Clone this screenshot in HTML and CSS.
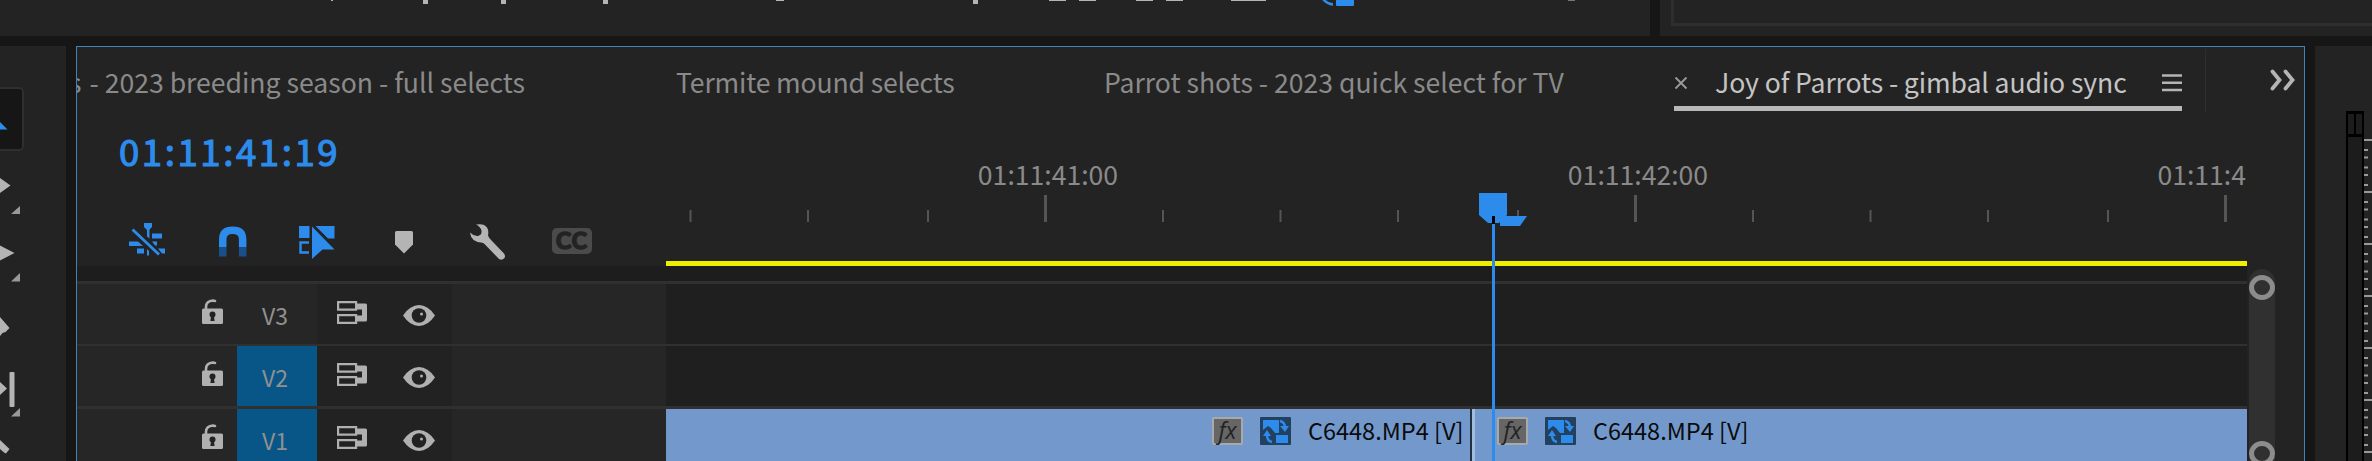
FILE: index.html
```
<!DOCTYPE html>
<html lang="en">
<head>
    <meta charset="UTF-8">
    <meta name="viewport" content="width=device-width, initial-scale=1.0">
    <title>Timeline - Joy of Parrots</title>
    <link rel="stylesheet" href="styles.css">
</head>
<body>
    <!-- Shared icons -->
    <svg class="sprite">
        <symbol id="lock" viewBox="0 0 21 25">
            <path d="M4 10V8Q4 2 11 1.5L13 2" fill="none" stroke="#b0b0b0" stroke-width="2.6" stroke-linecap="round"/>
            <rect y="9.5" width="21" height="15.5" rx="1.5" fill="#b0b0b0"/>
            <circle cx="10.5" cy="15.5" r="3" fill="#222"/>
            <path d="M9.2 16h2.6l.8 6h-4.2z" fill="#222"/>
        </symbol>
        <symbol id="sync" viewBox="0 0 30 23">
            <path d="M1.1 1.1h18v7.6h-18zM1.1 14.2h18v7.6h-18z" fill="none" stroke="#b0b0b0" stroke-width="2.2"/>
            <path d="M20 2.5h8.500q1.500 0 1.500 1.500v15q0 1.500-1.500 1.500h-8.500v-6h5v-6h-5z" fill="#b0b0b0"/>
        </symbol>
        <symbol id="eye" viewBox="0 0 32 21">
            <path d="M0 10.500Q7 0 16 0t16 10.500Q25 21 16 21T0 10.500z" fill="#b0b0b0"/>
            <circle cx="16" cy="10.500" r="7.300" fill="#222"/>
            <circle cx="18.500" cy="9" r="1.500" fill="#b0b0b0"/>
        </symbol>
        <symbol id="proxy" viewBox="0 0 31 28">
            <rect width="31" height="28" rx="1" fill="#24405f"/>
            <path d="M3 3h16v13h-4l-4-5-3-2-5 4z" fill="#2d8ceb"/>
            <path d="M16 18h12v8h-12z" fill="#2d8ceb"/>
            <path d="M20 4q5 1 5 7" fill="none" stroke="#2d8ceb" stroke-width="2.500"/>
            <path d="M20 9h9l-4 6zM3 19l4-6 4 6z" fill="#2d8ceb"/>
            <path d="M7 18q0 6 5 7" fill="none" stroke="#2d8ceb" stroke-width="2.500"/>
        </symbol>
    </svg>

    <div class="app">
        <div class="top-row">
            <div class="monitor">
                <svg width="1650" height="8">
                    <g fill="#b4b4b4">
                        <rect x="331" width="2" height="1"/>
                        <rect x="423" width="5" height="4"/>
                        <rect x="501" width="5" height="4"/>
                        <rect x="603" width="5" height="4"/>
                        <rect x="776" width="8" height="1"/>
                        <rect x="973" width="5" height="4"/>
                        <rect x="1049" width="17" height="1"/>
                        <rect x="1079" width="17" height="1"/>
                        <rect x="1136" width="17" height="1"/>
                        <rect x="1166" width="17" height="1"/>
                        <rect x="1231" width="35" height="1"/>
                        <rect x="1568" width="7" height="1" fill="#777"/>
                    </g>
                    <path d="M1323 -1Q1327 4 1333 4.500" fill="none" stroke="#2d8ceb" stroke-width="2.500"/>
                    <rect x="1336" y="-2" width="18" height="8" rx="1" fill="#2d8ceb"/>
                </svg>
            </div>
            <div class="program">
                <div class="program-frame"></div>
            </div>
        </div>

        <div class="main-row">
            <div class="tools">
                <div class="tool-active"></div>
                <svg class="tool-icons" width="66" height="415">
                    <path d="M0 76l7.500 7.500H0z" fill="#2d8ceb"/>
                    <g fill="#b4b4b4">
                        <path d="M0 132l10.500 7.500L0 147z"/>
                        <path d="M0 199.500l14.500 7.500L0 214.500z"/>
                        <path d="M0 271l9.500 11-4 4-3 1-2.500 3z"/>
                        <path d="M0 336l7 6.500L0 349z"/>
                        <rect x="9.500" y="326" width="5" height="35" rx="1"/>
                        <path d="M0 394l9.500 9-3.500 4.500-2-1L0 403z"/>
                    </g>
                    <path d="M20 160v8h-9zM20 227v8.500h-9zM20 362v8.500h-9z" fill="#999"/>
                </svg>
            </div>

            <div class="timeline">
                <div class="tabs">
                    <div class="tab tab-first"><span class="cut">s</span> <span class="name">- 2023 breeding season - full selects</span></div>
                    <div class="tab tab-termite"><span class="name">Termite mound selects</span></div>
                    <div class="tab tab-parrot"><span class="name">Parrot shots - 2023 quick select for TV</span></div>
                    <div class="tab active">
                        <svg class="close" width="14" height="14"><path d="M1.500 1.500l11 11M12.500 1.500l-11 11" stroke="#9a9a9a" stroke-width="1.800"/></svg>
                        <span class="name">Joy of Parrots - gimbal audio sync</span>
                        <svg class="menu" width="20" height="18"><path d="M0 1.500h20M0 8.700h20M0 16h20" stroke="#b4b4b4" stroke-width="2.400"/></svg>
                    </div>
                    <div class="overflow">
                        <svg width="26" height="22"><path d="M2.500 2.500L9.500 11l-7 8.500M15.500 2.500l7 8.500-7 8.500" fill="none" stroke="#b4b4b4" stroke-width="3.800" stroke-linecap="round"/></svg>
                    </div>
                </div>

                <div class="body">
                    <div class="headers">
                        <div class="controls">
                            <div class="timecode">01:11:41:19</div>
                            <div class="toolbar">
                                <svg width="36" height="38">
                                    <g fill="#2d8ceb">
                                        <path d="M15 1h8v4l-2.500 2.500v9l-2.500-2v-6.500L15 5zM23 11.500h10v5H23zM23 19.500h5v4h-2zM0 19.500h9l5 4.500H0zM8 26.500h7v5H8zM18 27l2 2v4.500h-2zM29 26.500h7v5h-3z"/>
                                    </g>
                                    <path d="M3.500 7.500L30 32.500" stroke="#2d8ceb" stroke-width="2.800"/>
                                </svg>
                                <svg width="30" height="38">
                                    <path d="M1 25V17.500Q1 4.500 14.700 4.500t13.700 13V25h-7.500v-8q0-5-6.200-5t-6.200 5v8z" fill="#2d8ceb"/>
                                    <path d="M1 25h7.500v9.500H1zM20.900 25h7.500v9.500h-7.500z" fill="#1a5088"/>
                                </svg>
                                <svg width="37" height="40">
                                    <path d="M0 4h10.500v12H0zM16.500 4h19v12.500h-6.500z" fill="#2d8ceb"/>
                                    <path d="M10 20.500H1.500v10H10" fill="none" stroke="#2d8ceb" stroke-width="2.400"/>
                                    <path d="M13 4.500L35.500 27.500h-12L13 37z" fill="#2d8ceb"/>
                                </svg>
                                <svg width="20" height="38"><path d="M2.500 9h15q1.500 0 1.500 1.500v12L10 31.500 1 22.500v-12Q1 9 2.500 9z" fill="#b4b4b4"/></svg>
                                <svg width="38" height="40"><path d="M7 2.500q8-1.500 11 3 2 3 1 8 1 3 4 5.500l12 12.500q2 3 0 5t-5 .5L15.500 22q-1-1.500-3.500-1.500Q2 19.500 1 10.500q4 4 8 3.500 4-1 3.500-5Q12 5 7 2.500z" fill="#b4b4b4"/></svg>
                                <svg width="40" height="38">
                                    <rect y="6" width="40" height="26" rx="5" fill="#4b4b4b"/>
                                    <text x="20" y="27" class="cc">CC</text>
                                </svg>
                            </div>
                        </div>
                        <div class="strip"></div>
                        <div class="track-head">
                            <svg class="lock"><use href="#lock"/></svg>
                            <div class="target">V3</div>
                            <div class="switches"><svg class="sync"><use href="#sync"/></svg><svg class="eye"><use href="#eye"/></svg></div>
                        </div>
                        <div class="track-head second">
                            <svg class="lock"><use href="#lock"/></svg>
                            <div class="target on">V2</div>
                            <div class="switches"><svg class="sync"><use href="#sync"/></svg><svg class="eye"><use href="#eye"/></svg></div>
                        </div>
                        <div class="track-head third">
                            <svg class="lock"><use href="#lock"/></svg>
                            <div class="target on">V1</div>
                            <div class="switches"><svg class="sync"><use href="#sync"/></svg><svg class="eye"><use href="#eye"/></svg></div>
                        </div>
                    </div>

                    <div class="canvas">
                        <div class="ruler">
                            <div class="labels">
                                <span>01:11:41:00</span>
                                <span>01:11:42:00</span>
                                <span class="last">01:11:4</span>
                            </div>
                            <svg class="ticks" width="1581" height="27">
                                <path d="M24.500 15v12M142 15v12M262 15v12M497 15v12M614.500 15v12M732 15v12M852 15v12M1087 15v12M1204.500 15v12M1322 15v12M1442 15v12" stroke="#555" stroke-width="2"/>
                                <path d="M379.500 0v27M969.500 0v27M1559.500 0v27" stroke="#555" stroke-width="3"/>
                            </svg>
                        </div>
                        <div class="work-area"></div>
                        <div class="strip"></div>
                        <div class="track"></div>
                        <div class="track second"></div>
                        <div class="track third">
                            <div class="clip clip-a">
                                <span class="fx">fx</span>
                                <svg class="proxy"><use href="#proxy"/></svg>
                                <span class="clip-name">C6448.MP4 [V]</span>
                            </div>
                            <div class="clip clip-b">
                                <span class="fx">fx</span>
                                <svg class="proxy"><use href="#proxy"/></svg>
                                <span class="clip-name">C6448.MP4 [V]</span>
                            </div>
                        </div>
                        <svg class="playhead" width="50" height="268">
                            <path d="M0 0h28v22l-8 8h-11l-9-8z" fill="#2d8ceb"/>
                            <path d="M21 23h27l-7 10H21z" fill="#2d8ceb"/>
                            <path d="M13 23h3v8h-3z" fill="#000"/>
                            <path d="M13 31h3v240h-3z" fill="#2d8ceb"/>
                        </svg>
                    </div>

                    <div class="scroll">
                        <div class="scroll-bar">
                            <div class="knob"></div>
                            <div class="knob"></div>
                        </div>
                    </div>
                </div>
            </div>

            <div class="meters">
                <div class="meter">
                    <div class="peak"><i></i><i></i></div>
                    <div class="level"></div>
                </div>
                <svg class="scale" width="8" height="350">
                    <defs>
                        <pattern id="db" width="8" height="52" patternUnits="userSpaceOnUse" y="28">
                            <path d="M0 1h8M0 11h4M0 18.500h4M0 28.500h4M0 36h4M0 46h4" stroke="#999" stroke-width="2.200"/>
                        </pattern>
                    </defs>
                    <rect y="28" width="8" height="322" fill="url(#db)"/>
                </svg>
            </div>
        </div>
    </div>
</body>
</html>
```
FILE: styles.css
```
* {
    margin: 0;
    padding: 0;
    box-sizing: border-box;
}

body {
    background: #161616;
    color: #8a8a8a;
    font-family: "Noto Sans CJK SC", "Noto Sans", sans-serif;
    overflow: hidden;
}

svg {
    display: block;
    flex-shrink: 0;
}

.sprite {
    position: absolute;
    width: 0;
    height: 0;
}

.app {
    display: flex;
    flex-direction: column;
    gap: 10px;
    width: 2372px;
    height: 461px;
    overflow: hidden;
}

/* Bottom edge of the monitors */
.top-row {
    display: flex;
    gap: 10px;
    height: 36px;
    flex-shrink: 0;
}

.monitor {
    width: 1650px;
    background: #232323;
}

.program {
    flex: 1;
    background: #232323;
    padding-left: 11px;
}

.program-frame {
    height: 26px;
    border-left: 3px solid #2e2e2e;
    border-bottom: 3px solid #2e2e2e;
}

.main-row {
    display: flex;
    gap: 10px;
    height: 415px;
}

/* Tools */
.tools {
    width: 66px;
    background: #232323;
    overflow: hidden;
    display: grid;
}

.tools > * {
    grid-area: 1 / 1;
}

.tool-active {
    width: 34px;
    height: 64px;
    margin: 41px 0 0 -10px;
    background: #161616;
    border: 2px solid #2f2f2f;
    border-radius: 5px;
}

/* Timeline panel */
.timeline {
    width: 2229px;
    border: 1px solid #3f82bd;
    border-bottom: none;
    background: #232323;
}

.tabs {
    display: flex;
    height: 65px;
    font-size: 26.6px;
    line-height: 40px;
    white-space: nowrap;
}

.tab {
    padding-top: 15px;
    overflow: hidden;
}

.tab-first {
    display: flex;
    gap: 8px;
    width: 599px;
}

.cut {
    margin-left: -8px;
}

.tab-termite {
    width: 428px;
    letter-spacing: -0.15px;
}

.tab-parrot {
    width: 570px;
}

.active {
    display: flex;
    width: 508px;
    height: 64px;
    color: #c4c4c4;
    border-bottom: 5px solid #b8b8b8;
    letter-spacing: -0.1px;
}

.close {
    margin: 14px 27px 0 0;
}

.menu {
    margin: 12px 0 0 auto;
}

.overflow {
    width: 98px;
    margin: 2px 0 0 23px;
    border-left: 1px solid #2e2e2e;
    padding: 20px 0 0 64px;
}

.body {
    display: flex;
    height: 349px;
}

.headers {
    width: 589px;
}

.controls {
    height: 154px;
    padding: 14px 0 0 42px;
}

.timecode {
    height: 50px;
    line-height: 50px;
    font-size: 36.5px;
    letter-spacing: 2.6px;
    color: #2d8ceb;
    -webkit-text-stroke: 1.2px #2d8ceb;
}

.toolbar {
    display: grid;
    grid-template-columns: 89px 81px 95px 75px 83px 40px;
    margin: 46px 0 0 10px;
}

.cc {
    font: bold 23px "Lato", sans-serif;
    letter-spacing: 1px;
    text-anchor: middle;
    fill: #232323;
    stroke: #232323;
    stroke-width: 1.6px;
}

.strip {
    height: 15px;
    background: #1d1d1d;
}

.track-head {
    display: flex;
    height: 63px;
    border-top: 3px solid #303030;
    background: #262626;
}

.track-head.second {
    height: 62px;
    border-top-width: 2px;
}

.lock {
    width: 21px;
    height: 25px;
    margin: 15px 14px 0 125px;
}

.target {
    width: 80px;
    line-height: 62px;
    height: 60px;
    padding-right: 4px;
    font-size: 23px;
    text-align: center;
    color: #909090;
}

.target.on {
    background: #075687;
}

.switches {
    display: flex;
    width: 135px;
    padding-left: 20px;
    background: #222;
}

.sync {
    width: 30px;
    height: 23px;
    margin: 17px 36px 0 0;
}

.eye {
    width: 32px;
    height: 21px;
    margin-top: 21px;
}

/* Ruler and tracks */
.canvas {
    position: relative;
    width: 1581px;
    overflow: hidden;
}

.ruler {
    height: 149px;
    padding-top: 42px;
}

.labels {
    display: flex;
    height: 41px;
    line-height: 40px;
    margin-left: 87px;
    font-size: 26.6px;
}

.labels span {
    width: 590px;
    flex-shrink: 0;
    text-align: center;
}

.labels .last {
    width: 313px;
    text-align: right;
}

.work-area {
    height: 5px;
    background: #f0ee00;
}

.track {
    height: 63px;
    border-top: 3px solid #303030;
    background: #1f1f1f;
}

.track.second {
    height: 62px;
    border-top-width: 2px;
}

.track.third {
    display: flex;
}

.clip {
    display: flex;
    height: 60px;
    padding-top: 8px;
    background: #7399cc;
    color: #0b0b0b;
    white-space: nowrap;
}

.clip-a {
    width: 806px;
    padding-left: 546px;
    border-right: 2px solid #23303f;
}

.clip-b {
    flex: 1;
    padding-left: 22px;
    border-left: 3px solid #a3bbdd;
}

.fx {
    width: 31px;
    height: 28px;
    margin-right: 17px;
    border: 2px solid #a9a9a9;
    border-radius: 2px;
    background: #666;
    color: #222;
    font: italic 23px/22px "Open Sans", sans-serif;
    text-align: center;
}

.proxy {
    width: 31px;
    height: 28px;
    margin-right: 17px;
}

.clip-name {
    font-size: 23.5px;
    line-height: 27px;
}

.playhead {
    position: absolute;
    left: 813px;
    top: 81px;
}

.scroll {
    padding: 157px 0 0 2px;
}

.scroll-bar {
    display: flex;
    flex-direction: column;
    gap: 141px;
    width: 26px;
    height: 240px;
    padding-top: 6px;
    border-radius: 13px 13px 0 0;
    background: #303030;
}

.knob {
    width: 26px;
    height: 25px;
    flex-shrink: 0;
    border: 5px solid #8c8c8c;
    border-radius: 50%;
}

/* Audio meters */
.meters {
    display: flex;
    width: 57px;
    padding: 65px 0 0 31px;
    background: #232323;
}

.meter {
    width: 18px;
    background: #000;
    padding: 3px 2px 0;
}

.peak {
    display: flex;
    gap: 2px;
    height: 20px;
    margin-bottom: 3px;
}

.peak i {
    flex: 1;
    background: #1c1c1c;
}

.level {
    height: 330px;
    background: #1c1c1c;
}
```
